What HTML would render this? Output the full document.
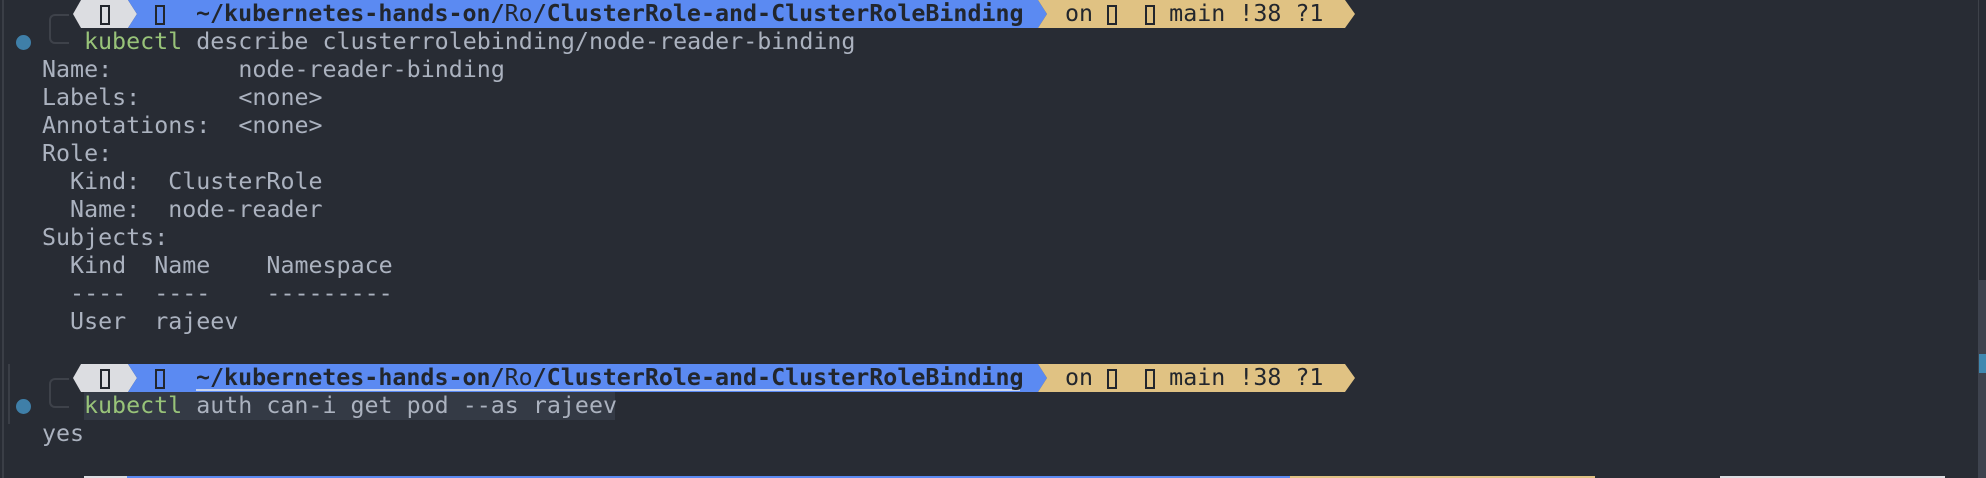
<!DOCTYPE html>
<html><head><meta charset="utf-8"><style>
body{margin:0;width:1986px;height:478px;background:#282c34;overflow:hidden;position:relative;font-family:"DejaVu Sans Mono","Liberation Mono",monospace;font-size:23.3px;color:#abb2bf}
.l{position:absolute;height:28px;line-height:28px;white-space:pre}
.bar{position:absolute;height:28px;line-height:28px;white-space:pre;color:#22262d}
.g{color:#98c379}
.box{display:inline-block;width:10px;height:20px;border:2px solid #22262d;vertical-align:middle;box-sizing:border-box}
</style></head><body>
<div style="position:absolute;left:2px;top:0;width:2px;height:478px;background:#3a3e46"></div>
<div style="position:absolute;left:1978px;top:0;width:1px;height:280px;background:#3e424a"></div>
<div style="position:absolute;left:1978px;top:280px;width:8px;height:198px;background:#3e434e"></div>
<div style="position:absolute;left:1979px;top:354px;width:7px;height:19px;background:#3f88b0"></div>

<!-- prompt 1 -->
<svg style="position:absolute;left:0;top:0" width="1400" height="28">
<polygon points="73,14 81,0 128,0 137,14 128,28 81,28" fill="#dcdde1"/>
<polygon points="128,0 1038,0 1047,14 1038,28 128,28 137,14" fill="#5b8af2"/>
<polygon points="1038,0 1345,0 1355,14 1345,28 1038,28 1047,14" fill="#e0c283"/>
</svg>
<div class="bar" style="left:100px;top:0"><span class="box"></span></div>
<div class="bar" style="left:155px;top:0"><span class="box"></span></div>
<div class="bar" style="left:196px;top:0;font-weight:bold">~/kubernetes-hands-on/<span style="font-weight:normal">Ro</span>/ClusterRole-and-ClusterRoleBinding</div>
<div class="bar" style="left:1065px;top:0">on <span class="box"></span>  <span class="box"></span> main !38 ?1</div>
<div style="position:absolute;left:49px;top:14px;width:18px;height:26px;border:2px solid #3e424a;border-right:none;border-radius:6px 0 0 6px"></div>
<div style="position:absolute;left:16px;top:35px;width:15px;height:15px;border-radius:50%;background:#3f7fa8"></div>
<div class="l" style="left:84px;top:28px"><span class="g">kubectl</span> describe clusterrolebinding/node-reader-binding</div>
<div class="l" style="left:42px;top:56px">Name:         node-reader-binding</div>
<div class="l" style="left:42px;top:84px">Labels:       &lt;none&gt;</div>
<div class="l" style="left:42px;top:112px">Annotations:  &lt;none&gt;</div>
<div class="l" style="left:42px;top:140px">Role:</div>
<div class="l" style="left:42px;top:168px">  Kind:  ClusterRole</div>
<div class="l" style="left:42px;top:196px">  Name:  node-reader</div>
<div class="l" style="left:42px;top:224px">Subjects:</div>
<div class="l" style="left:42px;top:252px">  Kind  Name    Namespace</div>
<div class="l" style="left:42px;top:280px">  ----  ----    ---------</div>
<div class="l" style="left:42px;top:308px">  User  rajeev</div>

<!-- prompt 2 -->
<div style="position:absolute;left:8px;top:364px;width:2px;height:60px;background:#3a3e46"></div>
<svg style="position:absolute;left:0;top:364px" width="1400" height="28">
<polygon points="73,14 81,0 128,0 137,14 128,28 81,28" fill="#dcdde1"/>
<polygon points="128,0 1038,0 1047,14 1038,28 128,28 137,14" fill="#5b8af2"/>
<polygon points="1038,0 1345,0 1355,14 1345,28 1038,28 1047,14" fill="#e0c283"/>
<rect x="196" y="25" width="824" height="2" fill="#c8d4f0"/>
</svg>
<div class="bar" style="left:100px;top:364px"><span class="box"></span></div>
<div class="bar" style="left:155px;top:364px"><span class="box"></span></div>
<div class="bar" style="left:196px;top:364px;font-weight:bold">~/kubernetes-hands-on/<span style="font-weight:normal">Ro</span>/ClusterRole-and-ClusterRoleBinding</div>
<div class="bar" style="left:1065px;top:364px">on <span class="box"></span>  <span class="box"></span> main !38 ?1</div>
<div style="position:absolute;left:49px;top:378px;width:18px;height:26px;border:2px solid #3e424a;border-right:none;border-radius:6px 0 0 6px"></div>
<div style="position:absolute;left:16px;top:399px;width:15px;height:15px;border-radius:50%;background:#3f7fa8"></div>
<div style="position:absolute;left:84px;top:392px;width:531px;height:28px;background:#343a45"></div>
<div class="l" style="left:84px;top:392px"><span class="g">kubectl</span> auth can-i get pod --as rajeev</div>
<div class="l" style="left:42px;top:420px">yes</div>

<!-- bottom strip -->
<div style="position:absolute;left:84px;top:476px;width:43px;height:2px;background:#dcdde1"></div>
<div style="position:absolute;left:127px;top:476px;width:1163px;height:2px;background:#5b8af2"></div>
<div style="position:absolute;left:1290px;top:476px;width:305px;height:2px;background:#e0c283"></div>
<div style="position:absolute;left:1720px;top:476px;width:225px;height:2px;background:#dcdde1"></div>
</body></html>
